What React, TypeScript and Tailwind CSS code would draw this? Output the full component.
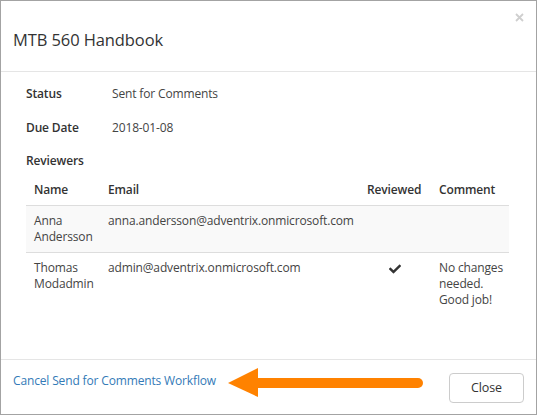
import React from "react";

const rows = [
  { name: ["Anna", "Andersson"], email: "anna.andersson@adventrix.onmicrosoft.com", reviewed: false, comment: [] as string[] },
  { name: ["Thomas", "Modadmin"], email: "admin@adventrix.onmicrosoft.com", reviewed: true, comment: ["No changes", "needed.", "Good job!"] },
];

function Check() {
  return (
    <svg width="12" height="12" viewBox="0 0 512 512" className="inline-block" fill="#333">
      <path d="M173.898 439.404l-166.4-166.4c-9.997-9.997-9.997-26.206 0-36.204l36.203-36.204c9.997-9.998 26.207-9.998 36.204 0L192 312.69 432.095 72.596c9.997-9.997 26.207-9.997 36.204 0l36.203 36.204c9.997 9.997 9.997 26.206 0 36.204l-294.4 294.401c-9.998 9.997-26.207 9.997-36.204-.001z" />
    </svg>
  );
}

export default function App() {
  return (
    <div
      className="relative flex h-[415px] w-[537px] flex-col border border-[#a3a3a3] bg-white text-[12px] leading-[16px] tracking-[-0.15px] text-[#444]"
      style={{ fontFamily: '"Open Sans", "Liberation Sans", sans-serif' }}
    >
      <div className="h-[71px] shrink-0 border-b border-[#e5e5e5] pl-[12px] pt-[27px]">
        <h1 className="text-[16.5px] leading-[24px] font-normal tracking-[-0.1px] text-[#333]">MTB 560 Handbook</h1>
      </div>
      <svg className="absolute left-[514px] top-[12px]" width="9" height="9" viewBox="0 0 9 9">
        <path d="M1 1L8 8M8 1L1 8" stroke="#cfcfcf" strokeWidth="1.8" />
      </svg>

      <div className="flex-1 pl-[25px] pr-[26px] pt-[14px]">
        <div className="flex">
          <div className="w-[86px] font-semibold text-[#333]">Status</div>
          <div>Sent for Comments</div>
        </div>
        <div className="mt-[18px] flex">
          <div className="w-[86px] font-semibold text-[#333]">Due Date</div>
          <div>2018-01-08</div>
        </div>
        <div className="mt-[17px] font-semibold text-[#333]">Reviewers</div>
        <table className="mt-[6px] w-[483px] table-fixed border-collapse text-left">
          <colgroup>
            <col className="w-[74px]" />
            <col className="w-[259px]" />
            <col className="w-[72px]" />
            <col className="w-[78px]" />
          </colgroup>
          <thead>
            <tr className="font-semibold text-[#333]">
              <th className="px-[8px] py-[7px] font-semibold">Name</th>
              <th className="px-[8px] py-[7px] font-semibold">Email</th>
              <th className="px-[8px] py-[7px] font-semibold">Reviewed</th>
              <th className="pl-[8px] pr-[2px] py-[7px] font-semibold">Comment</th>
            </tr>
          </thead>
          <tbody>
            {rows.map((r, i) => (
              <tr key={i} className={`border-t border-[#dddddd] align-top ${i === 0 ? "bg-[#f9f9f9]" : ""}`}>
                <td className="px-[8px] py-[7px]">
                  {r.name.map((n) => (
                    <div key={n}>{n}</div>
                  ))}
                </td>
                <td className="px-[8px] py-[7px] whitespace-nowrap">{r.email}</td>
                <td className="px-[8px] py-[7px] text-center">{r.reviewed ? <Check /> : null}</td>
                <td className="pl-[8px] pr-[2px] py-[7px]">
                  {r.comment.map((c) => (
                    <div key={c} className="whitespace-nowrap">{c}</div>
                  ))}
                </td>
              </tr>
            ))}
          </tbody>
        </table>
      </div>

      <div className="flex h-[55px] shrink-0 items-start justify-between border-t border-[#e5e5e5] px-[12px] pt-[13px]">
        <a className="text-[#337ab7]" href="#">Cancel Send for Comments Workflow</a>
        <button className="h-[30px] w-[75px] rounded-[4px] border border-[#cccccc] bg-white text-[12.5px] text-[#333]">
          Close
        </button>
      </div>

      <svg className="absolute left-[220px] top-[360px]" width="210" height="40" viewBox="0 0 210 40">
        <polygon points="7,22 37,7 37,36" fill="#ff8200" />
        <line x1="34" y1="22" x2="197" y2="22" stroke="#ff8200" strokeWidth="10" strokeLinecap="round" />
      </svg>
    </div>
  );
}
